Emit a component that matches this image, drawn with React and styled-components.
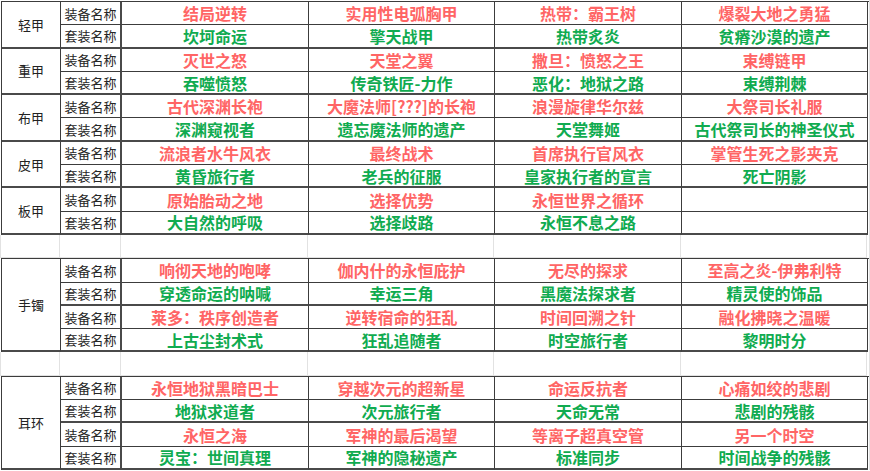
import React from "react";
import styled, { createGlobalStyle } from "styled-components";

const Global = createGlobalStyle`
  html, body { margin: 0; padding: 0; background: #ffffff; }
  body { font-family: "Noto Sans CJK SC", "Noto Sans", sans-serif; }
`;

const COLS = "59px 61px 187px 186px 187px 186px";
const ROW_H = 23.3;
const DARK = "#3c3c3c";
const GRID = "#e2e2e2";

const Sheet = styled.div`
  width: 868px;
  padding: 1px 0 0 1px;
  border-right: 1px solid ${GRID};
  display: flex;
  flex-direction: column;
`;

const Block = styled.div`
  display: grid;
  grid-template-columns: ${COLS};
  grid-auto-rows: ${ROW_H}px;
  border-top: 1px solid ${DARK};
  border-left: 1px solid ${DARK};
`;

const GapRow = styled.div`
  display: grid;
  grid-template-columns: ${COLS};
  height: ${ROW_H}px;
  margin-left: -1px;
  border-left: 1px solid ${GRID};
`;

const GapCell = styled.div`
  box-sizing: border-box;
  border-right: 1px solid ${GRID};
  border-bottom: 1px solid ${GRID};
`;

const BaseCell = styled.div`
  box-sizing: border-box;
  display: flex;
  align-items: center;
  justify-content: center;
  border-right: 1px solid ${DARK};
  border-bottom: ${(p) => (p.$end ? `2px solid #4a4a4a` : `1px solid ${DARK}`)};
  white-space: nowrap;
  overflow: hidden;
`;

const Category = styled(BaseCell)`
  grid-row: span ${(p) => p.$span};
  font-size: 13px;
  color: #222;
  border-bottom: 2px solid #4a4a4a;
`;

const Label = styled(BaseCell)`
  font-size: 13px;
  color: #262626;
  border-right: 2px solid #4a4a4a;
`;

const Name = styled(BaseCell)`
  font-size: 16px;
  font-weight: 700;
  color: ${(p) => (p.$tone === "red" ? "#ff6565" : "#10ab50")};
  letter-spacing: 0;
`;

const armor = [
  {
    cat: "轻甲",
    rows: [
      ["结局逆转", "实用性电弧胸甲", "热带：霸王树", "爆裂大地之勇猛"],
      ["坎坷命运", "擎天战甲", "热带炙炎", "贫瘠沙漠的遗产"],
    ],
  },
  {
    cat: "重甲",
    rows: [
      ["灭世之怒", "天堂之翼", "撒旦：愤怒之王", "束缚链甲"],
      ["吞噬愤怒", "传奇铁匠-力作", "恶化：地狱之路", "束缚荆棘"],
    ],
  },
  {
    cat: "布甲",
    rows: [
      ["古代深渊长袍", "大魔法师[???]的长袍", "浪漫旋律华尔兹", "大祭司长礼服"],
      ["深渊窥视者", "遗忘魔法师的遗产", "天堂舞姬", "古代祭司长的神圣仪式"],
    ],
  },
  {
    cat: "皮甲",
    rows: [
      ["流浪者水牛风衣", "最终战术", "首席执行官风衣", "掌管生死之影夹克"],
      ["黄昏旅行者", "老兵的征服", "皇家执行者的宣言", "死亡阴影"],
    ],
  },
  {
    cat: "板甲",
    rows: [
      ["原始胎动之地", "选择优势", "永恒世界之循环", ""],
      ["大自然的呼吸", "选择歧路", "永恒不息之路", ""],
    ],
  },
];

const bracelet = {
  cat: "手镯",
  rows: [
    ["响彻天地的咆哮", "伽内什的永恒庇护", "无尽的探求", "至高之炎-伊弗利特"],
    ["穿透命运的呐喊", "幸运三角", "黑魔法探求者", "精灵使的饰品"],
    ["莱多：秩序创造者", "逆转宿命的狂乱", "时间回溯之针", "融化拂晓之温暖"],
    ["上古尘封术式", "狂乱追随者", "时空旅行者", "黎明时分"],
  ],
};

const earring = {
  cat: "耳环",
  rows: [
    ["永恒地狱黑暗巴士", "穿越次元的超新星", "命运反抗者", "心痛如绞的悲剧"],
    ["地狱求道者", "次元旅行者", "天命无常", "悲剧的残骸"],
    ["永恒之海", "军神的最后渴望", "等离子超真空管", "另一个时空"],
    ["灵宝：世间真理", "军神的隐秘遗产", "标准同步", "时间战争的残骸"],
  ],
};

function Group({ group }) {
  return (
    <>
      {group.rows.map((row, i) => {
        const isEquip = i % 2 === 0;
        const end = i % 2 === 1;
        return (
          <React.Fragment key={i}>
            {i === 0 && <Category $span={group.rows.length}>{group.cat}</Category>}
            <Label $end={end}>{isEquip ? "装备名称" : "套装名称"}</Label>
            {row.map((name, j) => (
              <Name key={j} $end={end} $tone={isEquip ? "red" : "green"}>
                {name}
              </Name>
            ))}
          </React.Fragment>
        );
      })}
    </>
  );
}

function Gap() {
  return (
    <GapRow>
      {Array.from({ length: 6 }).map((_, i) => (
        <GapCell key={i} />
      ))}
    </GapRow>
  );
}

export default function App() {
  return (
    <>
      <Global />
      <Sheet>
        <Block>
          {armor.map((g) => (
            <Group key={g.cat} group={g} />
          ))}
        </Block>
        <Gap />
        <Block>
          <Group group={bracelet} />
        </Block>
        <Gap />
        <Block>
          <Group group={earring} />
        </Block>
      </Sheet>
    </>
  );
}
